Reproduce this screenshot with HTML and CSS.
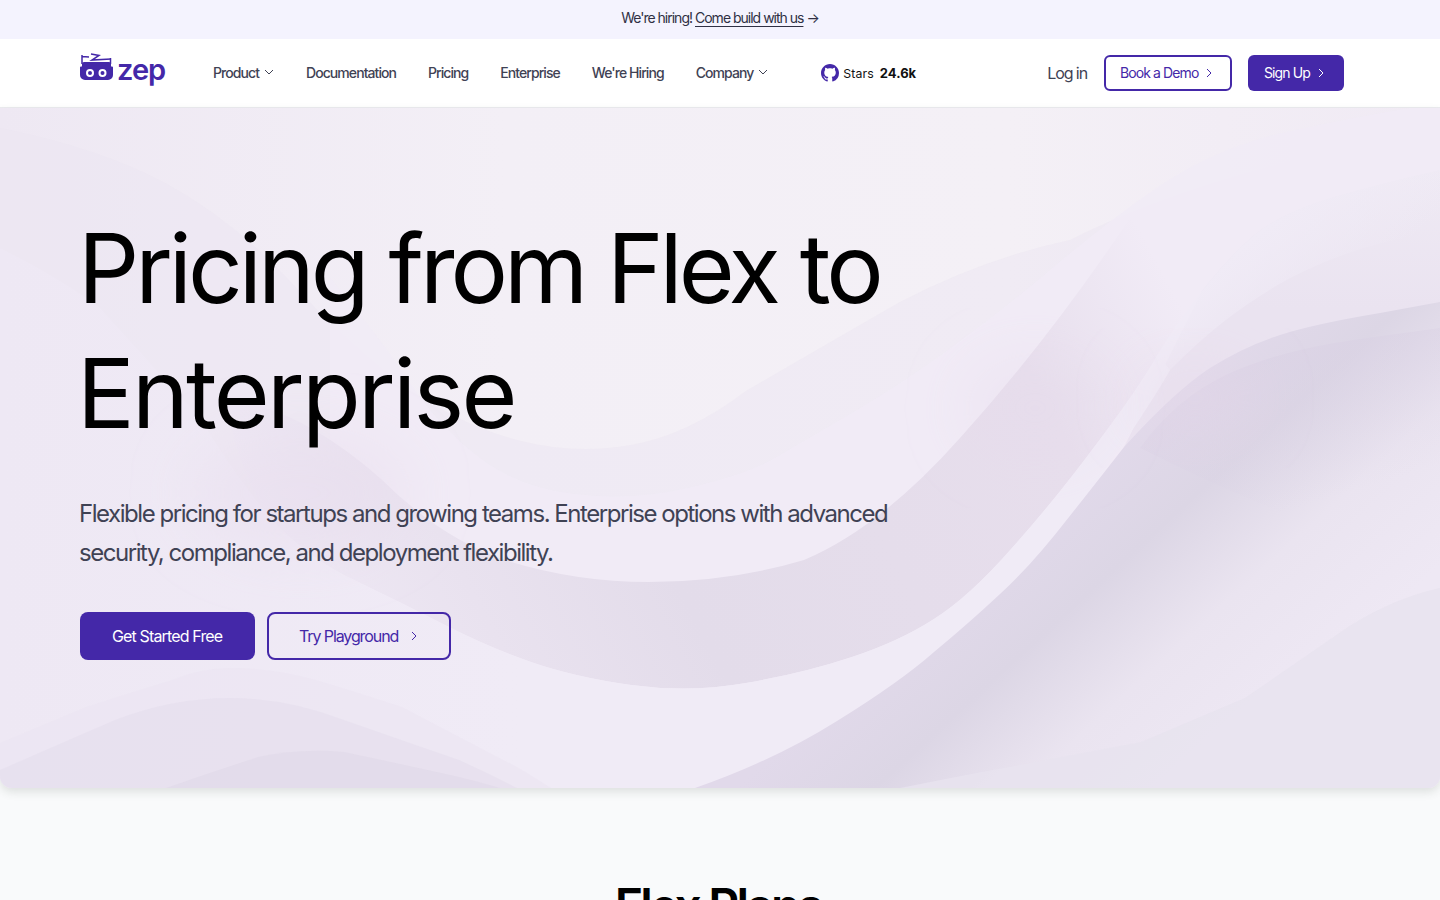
FILE: index.html
```html
<!DOCTYPE html>
<html lang="en">
<head>
<meta charset="utf-8">
<title>Zep Pricing</title>
<link rel="stylesheet" href="styles.css">
</head>
<body>
<div class="banner"><span>We're hiring!</span> <a href="#">Come build with us</a> <span>→</span></div>
<header class="nav">
  <a class="logo" href="#">
    <svg class="logo-mark" width="33" height="28" viewBox="0 0 33 28">
      <path d="M2 11V2M2 3.500 9 4M30.500 11V5" stroke="#4428a8" stroke-width="1.500" fill="none"/>
      <path d="M11 1 19 2.500 12 7 31 6" stroke="#4428a8" stroke-width="1.500" fill="none"/>
      <path d="M4 9H29a2 2 0 0 1 2 2v2.500h1a1 1 0 0 1 1 1V22a5 5 0 0 1-5 5H5a5 5 0 0 1-5-5V14.500a1 1 0 0 1 1-1h1V11a2 2 0 0 1 2-2z" fill="#4428a8"/>
      <circle cx="10" cy="20" r="3" fill="none" stroke="#fff" stroke-width="2"/>
      <circle cx="22.500" cy="20" r="3" fill="none" stroke="#fff" stroke-width="2"/>
    </svg>
    <span class="logo-text">zep</span>
  </a>
  <nav class="links">
    <a href="#">Product <svg class="chev" viewBox="0 0 10 6"><path d="M1 1l4 4 4-4"/></svg></a>
    <a href="#">Documentation</a>
    <a href="#">Pricing</a>
    <a href="#">Enterprise</a>
    <a href="#">We're Hiring</a>
    <a href="#">Company <svg class="chev" viewBox="0 0 10 6"><path d="M1 1l4 4 4-4"/></svg></a>
  </nav>
  <a class="stars" href="#">
    <svg width="18" height="18" viewBox="0 0 16 16"><path fill="#4428a8" d="M8 0C3.580 0 0 3.580 0 8c0 3.540 2.290 6.530 5.470 7.590.400.070.550-.170.550-.380 0-.190-.010-.820-.010-1.490-2.010.370-2.530-.490-2.690-.940-.090-.230-.480-.940-.820-1.130-.280-.150-.680-.520-.010-.530.630-.010 1.080.580 1.230.820.720 1.210 1.870.870 2.330.660.070-.520.280-.870.510-1.070-1.780-.200-3.640-.890-3.640-3.950 0-.870.310-1.590.820-2.150-.080-.200-.360-1.020.080-2.120 0 0 .670-.210 2.200.820.640-.180 1.320-.270 2-.270s1.360.090 2 .270c1.530-1.040 2.200-.820 2.200-.820.440 1.100.160 1.920.080 2.120.510.560.820 1.270.820 2.150 0 3.070-1.870 3.750-3.650 3.950.290.250.540.730.540 1.480 0 1.070-.010 1.930-.010 2.200 0 .210.150.460.550.380A8.010 8.010 0 0 0 16 8c0-4.420-3.580-8-8-8z"/></svg>
    <span class="stars-label">Stars</span><strong>24.6k</strong>
  </a>
  <div class="actions">
    <a class="login" href="#">Log in</a>
    <a class="btn outline" href="#">Book a Demo <svg class="caret" viewBox="0 0 6 10"><path d="M1 1l4 4-4 4"/></svg></a>
    <a class="btn solid" href="#">Sign Up <svg class="caret" viewBox="0 0 6 10"><path d="M1 1l4 4-4 4"/></svg></a>
  </div>
</header>
<section class="hero">
  <svg class="hero-bg" viewBox="0 0 1440 680" aria-hidden="true">
    <defs>
      <linearGradient id="base" x1="0" y1="0" x2="1" y2="0">
        <stop offset="0" stop-color="#eee8f3"/>
        <stop offset=".35" stop-color="#f3eff6"/>
        <stop offset=".7" stop-color="#f4f0f6"/>
        <stop offset="1" stop-color="#f0eaf4"/>
      </linearGradient>
      <linearGradient id="valley" gradientUnits="userSpaceOnUse" x1="1210" y1="120" x2="300" y2="600">
        <stop offset=".06" stop-color="#e8e0ee" stop-opacity="0"/>
        <stop offset=".22" stop-color="#e7deec"/>
        <stop offset=".62" stop-color="#e3dcea"/>
        <stop offset=".8" stop-color="#e9e2ef"/>
        <stop offset=".95" stop-color="#eee8f4"/>
      </linearGradient>
      <linearGradient id="light" gradientUnits="userSpaceOnUse" x1="0" y1="0" x2="520" y2="0">
        <stop offset="0" stop-color="#eee8f4"/>
        <stop offset="1" stop-color="#f0ebf6"/>
      </linearGradient>
      <linearGradient id="dark" gradientUnits="userSpaceOnUse" x1="1120" y1="330" x2="1330" y2="560">
        <stop offset="0" stop-color="#e1d9ea"/>
        <stop offset=".3" stop-color="#dcd6e5"/>
        <stop offset=".62" stop-color="#eae4f0"/>
        <stop offset="1" stop-color="#eee8f4"/>
      </linearGradient>
      <linearGradient id="dark2" gradientUnits="userSpaceOnUse" x1="1250" y1="240" x2="1300" y2="400">
        <stop offset="0" stop-color="#d8cfe3" stop-opacity=".45"/>
        <stop offset="1" stop-color="#d8cfe3" stop-opacity="0"/>
      </linearGradient>
      <linearGradient id="rib" gradientUnits="userSpaceOnUse" x1="1230" y1="150" x2="1300" y2="230">
        <stop offset="0" stop-color="#f0ebf6"/>
        <stop offset="1" stop-color="#f0ebf6" stop-opacity="0"/>
      </linearGradient>
      <linearGradient id="wedge" gradientUnits="userSpaceOnUse" x1="1300" y1="60" x2="1300" y2="200">
        <stop offset="0" stop-color="#efeaf4"/>
        <stop offset="1" stop-color="#eae3f0"/>
      </linearGradient>
      <filter id="soft" x="-50%" y="-50%" width="200%" height="200%"><feGaussianBlur stdDeviation="30"/></filter>
    </defs>
    <rect width="1440" height="680" fill="url(#base)"/>
    <path d="M0 20Q100 40 165 75Q230 110 287 170Q344 233 400 275Q459 317 517 332Q574 347 631 337Q688 327 746 283Q820 240 900 194Q985 150 1070 132Q1200 66 1440 20V680H0Z" fill="#ebe5f1" fill-opacity=".5"/>
    <path d="M1440 -5Q1331 13 1270 28Q1210 44 1158 79Q1107 114 1055 158Q1003 202 951 240Q900 277 852 305Q804 333 775 350Q746 367 688 380Q631 393 575 386Q520 380 480 350Q440 320 410 275Q380 230 330 170V680H1440Z" fill="#f1ebf6" fill-opacity=".9"/>
    <path d="M1202 183Q1228 150 1253 128Q1279 106 1331 90Q1383 75 1440 62V240L1124 339Z" fill="url(#wedge)"/>
    <path d="M1158 246Q1176 216 1202 183Q1228 150 1253 128Q1279 106 1331 90Q1383 75 1440 62V125C1350 135 1260 170 1170 262Z" fill="url(#rib)"/>
    <path d="M1202 183Q1176 216 1158 246Q1141 277 1098 334Q1055 392 1012 440Q969 489 934 511Q900 533 852 549Q804 565 746 575Q689 585 631 577Q574 569 531 554Q488 539 445 517Q402 495 356 473Q310 452 270 410Q240 370 225 290Q300 300 380 370Q440 430 505 452Q575 474 649 474Q730 474 804 452Q880 420 960 330Q1050 230 1130 110Z" fill="url(#valley)"/>
    <path d="M695 680Q775 652 837 613Q900 574 934 544Q969 515 1000 486Q1031 458 1069 409Q1107 361 1133 321Q1159 282 1170 262L1158 246Q1141 277 1098 334Q1055 392 1012 440Q969 489 934 511Q900 533 852 549Q804 565 746 575Q689 585 631 577Q574 569 531 554Q488 539 445 517Q402 495 356 473Q310 452 270 410Q230 360 200 310Q150 255 100 200 60 170 0 140V680Z" fill="url(#light)"/>
    <path d="M695 680Q775 652 837 613Q900 574 934 544Q969 515 1000 486Q1031 458 1069 409Q1107 361 1124 339Q1176 282 1210 260Q1245 238 1280 227Q1314 216 1380 205L1440 194V680Z" fill="url(#dark)"/>
    <path d="M1140 340Q1176 290 1228 266Q1280 242 1360 231L1440 220V460Q1300 420 1140 340Z" fill="url(#dark2)"/>
    <path d="M1440 480Q1394 490 1348 519Q1296 555 1245 590Q1193 612 1141 634Q1072 647 1003 660Q950 670 900 680H1440Z" fill="#e7e3ee" fill-opacity=".85"/>
    <path d="M0 635Q43 617 86 599Q129 585 172 572Q201 560 230 560Q273 560 316 572Q359 585 402 599Q459 629 517 659Q534 669 551 680H0Z" fill="#ebe4f1" fill-opacity=".6"/>
    <path d="M0 662Q57 637 115 612Q172 590 230 590Q287 590 344 612Q401 632 459 652Q488 665 517 680H0Z" fill="#e5deec" fill-opacity=".6"/>
    <path d="M166 680Q212 664 258 649Q301 640 344 644Q401 656 459 669Q480 674 500 680Z" fill="#e0d9e8" fill-opacity=".6"/>
    <ellipse cx="300" cy="385" rx="110" ry="60" fill="#e6d9ea" fill-opacity=".4" filter="url(#soft)"/>
    <ellipse cx="1035" cy="300" rx="70" ry="50" fill="#e6d9ea" fill-opacity=".35" filter="url(#soft)"/>
    <ellipse cx="1195" cy="290" rx="60" ry="35" fill="#e6d7e9" fill-opacity=".4" filter="url(#soft)"/>
  </svg>
  <div class="hero-content">
    <h1><span class="line-one">Pricing from Flex to</span> <span class="line-two">Enterprise</span></h1>
    <p>Flexible pricing for startups and growing teams. Enterprise options with advanced security, compliance, and deployment flexibility.</p>
    <div class="cta">
      <a class="btn large solid" href="#">Get Started Free</a>
      <a class="btn large outline" href="#">Try Playground <svg class="caret" viewBox="0 0 6 10"><path d="M1 1l4 4-4 4"/></svg></a>
    </div>
  </div>
</section>
<section class="plans"><h2>Flex Plans</h2></section>
</body>
</html>
```
FILE: styles.css
```css
* { box-sizing: border-box; }
html, body { margin: 0; height: 900px; overflow: hidden; }
body { font-family: Inter, "Liberation Sans", sans-serif; background: #f9fafb; color: #000; }
a { text-decoration: none; color: inherit; }
.banner { height: 39px; padding-bottom: 4px; background: #f4f3fe; display: flex; align-items: center; justify-content: center; gap: 3px; font-size: 14px; letter-spacing: -1px; color: #2f3044; }
.banner a { text-decoration: underline; text-underline-offset: 3px; }
.nav { height: 69px; background: #fff; border-bottom: 1px solid #ececf0; display: flex; align-items: center; padding: 0 96px 0 80px; }
.logo { display: flex; align-items: center; gap: 4px; width: 133px; color: #4428a8; }
.logo-mark { display: block; margin-bottom: 12px; }
.logo-text { font-size: 29px; font-weight: 600; letter-spacing: -1px; line-height: 30px; margin-bottom: 7px; }
.links { display: flex; align-items: center; gap: 32px; padding-bottom: 2px; font-size: 14px; font-weight: 500; letter-spacing: -.93px; color: #3f4254; }
.links a { display: flex; align-items: center; gap: 5px; }
.chev { width: 10px; height: 6px; fill: none; stroke: #3f4254; stroke-width: 1; }
.stars { display: flex; align-items: center; margin-left: 53px; font-size: 12.300px; color: #111; letter-spacing: .1px; }
.stars-label { margin-left: 4px; margin-right: 6px; }
.stars strong { font-weight: 700; font-size: 13px; letter-spacing: 0; }
.actions { margin-left: auto; display: flex; align-items: center; gap: 16px; }
.login { font-size: 16px; letter-spacing: -1.100px; padding-right: 1px; color: #3f4254; }
.btn { display: flex; align-items: center; height: 36px; padding: 0 0 1px 16px; border-radius: 6px; font-size: 14px; letter-spacing: -.9px; gap: 8px; }
.btn.solid { background: #4428a8; color: #fff; width: 96px; }
.btn.outline { border: 2px solid #4428a8; color: #4428a8; width: 128px; padding-left: 14px; }
.caret { width: 6px; height: 10px; fill: none; stroke: currentColor; stroke-width: 1; }
.hero { position: relative; height: 680px; padding: 98px 80px 0; box-shadow: 0 4px 10px rgba(60, 70, 60, .14); border-radius: 0 0 12px 12px; }
.hero-bg { position: absolute; inset: 0; width: 100%; height: 100%; display: block; border-radius: 0 0 12px 12px; }
.hero-content { position: relative; }
h1 { margin: 0; width: 900px; font-size: 96px; line-height: 124.800px; font-weight: 400; color: #000; }
.line-one { display: block; margin-left: -2px; letter-spacing: -4.050px; }
.line-two { display: block; margin-left: -3px; letter-spacing: -2.700px; }
.hero p { margin: 38px 0 0 -1px; width: 860px; font-size: 24px; line-height: 39px; letter-spacing: -1.460px; color: #3f4254; }
.cta { display: flex; gap: 12px; margin-top: 40px; }
.btn.large { height: 48px; font-size: 16px; border-radius: 8px; padding-bottom: 0; }
.btn.large.solid { width: 175px; padding-left: 32px; letter-spacing: -.85px; }
.btn.large.outline { width: 184px; padding-left: 30px; gap: 13px; letter-spacing: -1.100px; }
.plans { text-align: center; padding: 88px 4px 0 0; }
h2 { margin: 0; font-size: 48px; line-height: 60px; font-weight: 600; letter-spacing: -2.800px; color: #000; }
```
